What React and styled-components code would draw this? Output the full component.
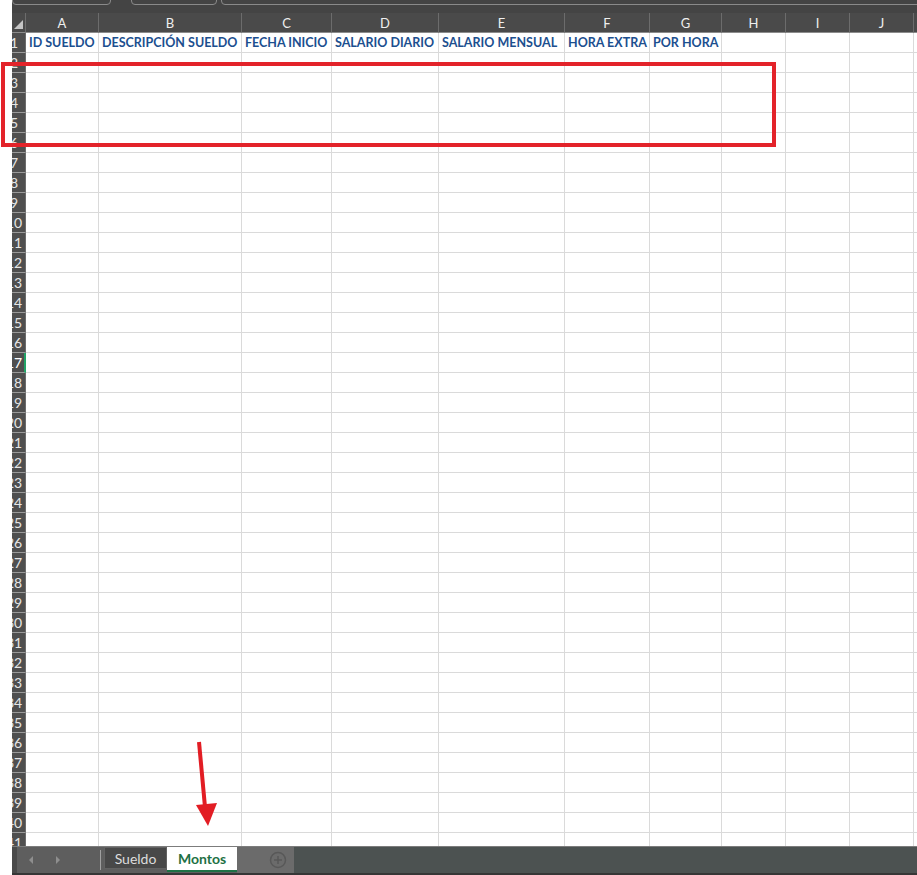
import React from "react";
import styled, { createGlobalStyle } from "styled-components";

const GlobalStyle = createGlobalStyle`
  html, body {
    margin: 0;
    background: #ffffff;
    font-family: Lato, "Liberation Sans", sans-serif;
  }
`;

const COLS = [73, 143, 90, 107, 126, 85, 72, 64, 64, 64];
const LETTERS = ["A", "B", "C", "D", "E", "F", "G", "H", "I", "J", ""];
const HEADERS = [
  "ID SUELDO",
  "DESCRIPCIÓN SUELDO",
  "FECHA INICIO",
  "SALARIO DIARIO",
  "SALARIO MENSUAL",
  "HORA EXTRA",
  "POR HORA",
];
const ROW_COUNT = 41;
const ACTIVE_ROW = 17;

const Window = styled.div`
  position: relative;
  width: 917px;
  height: 875px;
  overflow: hidden;
  padding-left: 12px;
  box-sizing: border-box;
  display: flex;
  flex-direction: column;
`;

const TopStrip = styled.div`
  height: 13px;
  flex: none;
  background: #444444;
  display: flex;
  align-items: flex-start;
  overflow: hidden;
`;

const RibbonButton = styled.div`
  flex: none;
  width: ${(p) => p.$width}px;
  margin-left: ${(p) => p.$gap}px;
  height: 12px;
  margin-top: -7px;
  box-sizing: border-box;
  border: 1px solid #8a8a8a;
  border-radius: 4px;
`;

const Sheet = styled.div`
  flex: 1;
  overflow: hidden;
  display: grid;
  grid-template-columns: 14px ${COLS.map((w) => w + "px").join(" ")} 1fr;
  grid-template-rows: 20px;
  grid-auto-rows: 20px;
`;

const Corner = styled.div`
  background: #4a4a4a;
  border-right: 1px solid #6c6c6c;
  border-bottom: 1px solid #8c8c8c;
  box-sizing: border-box;
  display: flex;
  align-items: flex-end;
  justify-content: flex-end;
  padding: 0 2px 3px 0;

  &::after {
    content: "";
    width: 0;
    height: 0;
    border-left: 9px solid transparent;
    border-bottom: 9px solid #c4c4c4;
  }
`;

const ColHead = styled.div`
  background: #4a4a4a;
  color: #efefef;
  font-size: 13px;
  border-right: 1px solid #6c6c6c;
  border-bottom: 1px solid #8c8c8c;
  box-sizing: border-box;
  display: flex;
  align-items: center;
  justify-content: center;
  padding-top: 1px;
`;

const RowHead = styled.div`
  background: #4f4f4f;
  color: ${(p) => (p.$active ? "#ffffff" : "#e6e6e6")};
  font-size: 14px;
  border-bottom: 1px solid #9a9a9a;
  border-right: ${(p) => (p.$active ? "2px solid #21a366" : "1px solid #6c6c6c")};
  box-sizing: border-box;
  overflow: hidden;
  display: flex;
  align-items: center;

  span {
    flex: none;
    width: 16px;
    margin-left: -6px;
    text-align: center;
  }
`;

const Cell = styled.div`
  border-right: 1px solid #dadada;
  border-bottom: 1px solid #dadada;
  box-sizing: border-box;
  font-size: 12.5px;
  font-weight: 700;
  color: #1c4f8f;
  white-space: nowrap;
  overflow: visible;
  display: flex;
  align-items: center;
  padding-left: 3px;
`;

const TabBar = styled.div`
  flex: none;
  height: 29px;
  display: flex;
  border-top: 1px solid #7c7c7c;
  border-bottom: 2px solid #363636;
  box-sizing: border-box;
  background: #5e5e5e;
`;

const NavArea = styled.div`
  width: 89px;
  display: flex;
  align-items: center;
  border-left: 5px solid #4a4a4a;
  box-sizing: border-box;
  position: relative;

  &::after {
    content: "";
    position: absolute;
    right: 0;
    top: 3px;
    bottom: 3px;
    width: 1px;
    background: #a0a0a0;
  }
`;

const NavArrow = styled.span`
  width: 0;
  height: 0;
  border-top: 4px solid transparent;
  border-bottom: 4px solid transparent;
  ${(p) =>
    p.$dir === "left"
      ? "border-right: 4px solid #8e8e8e;"
      : "border-left: 4px solid #8e8e8e;"}
  margin-left: ${(p) => p.$ml}px;
`;

const Tab = styled.div`
  flex: none;
  width: ${(p) => p.$width}px;
  margin-left: ${(p) => p.$ml || 0}px;
  height: ${(p) => (p.$active ? 25 : 22)}px;
  box-sizing: border-box;
  display: flex;
  align-items: center;
  justify-content: center;
  font-size: 14px;
  background: ${(p) => (p.$active ? "#ffffff" : "#484848")};
  color: ${(p) => (p.$active ? "#1e7145" : "#dcdcdc")};
  font-weight: ${(p) => (p.$active ? 700 : 400)};
  border: ${(p) => (p.$active ? "none" : "1px solid #626262")};
  border-bottom: ${(p) => (p.$active ? "2px solid #1e7145" : "1px solid #626262")};
`;

const AddArea = styled.div`
  width: 57px;
  flex: none;
  background: #6b6b6b;
  display: flex;
  align-items: center;
  justify-content: flex-end;
  padding-right: 7px;
  box-sizing: border-box;
`;

const RestArea = styled.div`
  flex: 1;
  background: #4c5251;
`;

const Highlight = styled.div`
  position: absolute;
  left: 1px;
  top: 62px;
  width: 775px;
  height: 85px;
  border: 4px solid #e3232a;
  box-sizing: border-box;
  pointer-events: none;
`;

const ArrowMark = styled.svg`
  position: absolute;
  left: 185px;
  top: 735px;
  pointer-events: none;
`;

function PlusIcon() {
  return (
    <svg width="18" height="18" viewBox="0 0 18 18">
      <circle cx="9" cy="9" r="7.5" fill="none" stroke="#585858" strokeWidth="1.5" />
      <path d="M9 5v8M5 9h8" stroke="#585858" strokeWidth="1.5" />
    </svg>
  );
}

export default function App() {
  const rows = [];
  for (let r = 1; r <= ROW_COUNT; r++) {
    rows.push(
      <RowHead key={"h" + r} $active={r === ACTIVE_ROW}>
        <span>{r}</span>
      </RowHead>
    );
    for (let c = 0; c < LETTERS.length; c++) {
      rows.push(
        <Cell key={r + "-" + c}>{r === 1 && HEADERS[c] ? HEADERS[c] : null}</Cell>
      );
    }
  }

  return (
    <>
      <GlobalStyle />
      <Window>
        <TopStrip>
          <RibbonButton $width={99} $gap={0} />
          <RibbonButton $width={86} $gap={20} />
          <RibbonButton $width={700} $gap={4} />
        </TopStrip>
        <Sheet>
          <Corner />
          {LETTERS.map((l, i) => (
            <ColHead key={i}>{l}</ColHead>
          ))}
          {rows}
        </Sheet>
        <TabBar>
          <NavArea>
            <NavArrow $dir="left" $ml={12} />
            <NavArrow $dir="right" $ml={23} />
          </NavArea>
          <Tab $width={63} $ml={3}>Sueldo</Tab>
          <Tab $width={70} $active>
            Montos
          </Tab>
          <AddArea>
            <PlusIcon />
          </AddArea>
          <RestArea />
        </TabBar>
        <Highlight />
        <ArrowMark width="40" height="100" viewBox="0 0 40 100">
          <path d="M14 7 L20 72" stroke="#e21d24" strokeWidth="4" strokeLinecap="butt" />
          <polygon points="11,70 32,68 23,91" fill="#e21d24" />
        </ArrowMark>
      </Window>
    </>
  );
}
